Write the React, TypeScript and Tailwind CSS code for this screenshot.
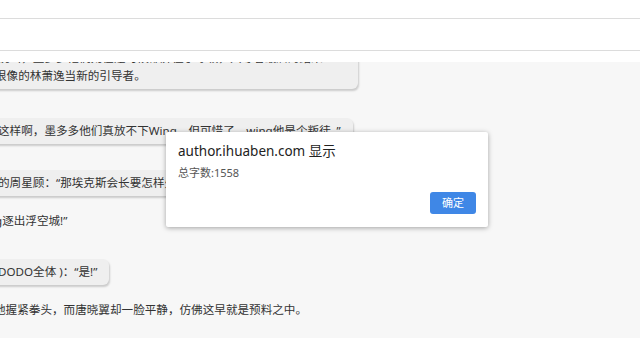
export default function App() {
  const font = { fontFamily: '"Noto Sans", "Noto Sans CJK SC", sans-serif' };

  return (
    <div
      className="relative h-[338px] w-[640px] overflow-hidden bg-[#f7f7f7] text-[#333]"
      style={font}
    >
      {/* top bar */}
      <div className="relative z-10 bg-white">
        <div className="h-[19px] border-b border-[#dcdcdc]" />
        <div className="h-[32px] border-b border-[#dcdcdc]" />
        <div className="h-[11px]" />
      </div>

      {/* chat content */}
      <div className="flex flex-col items-start text-[11.6px] leading-[18px]">
        <div className="-ml-[14px] -mt-[17px] w-[372px] overflow-hidden rounded-md bg-[#efefef] px-3 pb-[4px] pt-1 shadow-[1px_2px_2px_rgba(0,0,0,0.18)]">
          <p className="whitespace-nowrap">
            说出，墨多多他们则在这时候都屏住了呼吸，只等着最后的结果
          </p>
          <p className="-ml-[3px]">很像的林萧逸当新的引导者。</p>
        </div>

        <div className="-ml-[14px] mt-[29px] whitespace-nowrap rounded-md bg-[#efefef] px-3 py-1 shadow-[1px_2px_2px_rgba(0,0,0,0.18)]">
          这样啊，墨多多他们真放不下Wing，但可惜了，wing他是个叛徒。”
        </div>

        <div className="-ml-[14px] mt-[26px] whitespace-nowrap rounded-md bg-[#efefef] px-3 py-1 shadow-[1px_2px_2px_rgba(0,0,0,0.18)]">
          的周星顾：“那埃克斯会长要怎样处置他？”
        </div>

        <p className="-ml-[5px] mt-[16px] whitespace-nowrap">g逐出浮空城!”</p>

        <div className="-ml-[14px] mt-[29px] whitespace-nowrap rounded-md bg-[#efefef] px-3 py-1 shadow-[1px_2px_2px_rgba(0,0,0,0.18)]">
          DODO全体 )：“是!”
        </div>

        <p className="-ml-[6px] mt-[16px] whitespace-nowrap">
          地握紧拳头，而唐晓翼却一脸平静，仿佛这早就是预料之中。
        </p>
      </div>

      {/* alert dialog */}
      <div className="absolute left-[166px] top-[132px] z-20 flex h-[95px] w-[322px] flex-col rounded-[2px] bg-white px-3 pb-[13px] pt-[10px] shadow-[0_1px_5px_rgba(0,0,0,0.35)]">
        <p className="text-[13.5px] leading-[18px] text-[#222]">
          author.ihuaben.com 显示
        </p>
        <p className="mt-[6px] text-[11px] leading-[14px] text-[#555]">
          总字数:1558
        </p>
        <div className="mt-auto flex justify-end">
          <button className="h-[22px] w-[46px] rounded-[3px] bg-[#3f87e6] text-[11px] text-white">
            确定
          </button>
        </div>
      </div>
    </div>
  );
}
